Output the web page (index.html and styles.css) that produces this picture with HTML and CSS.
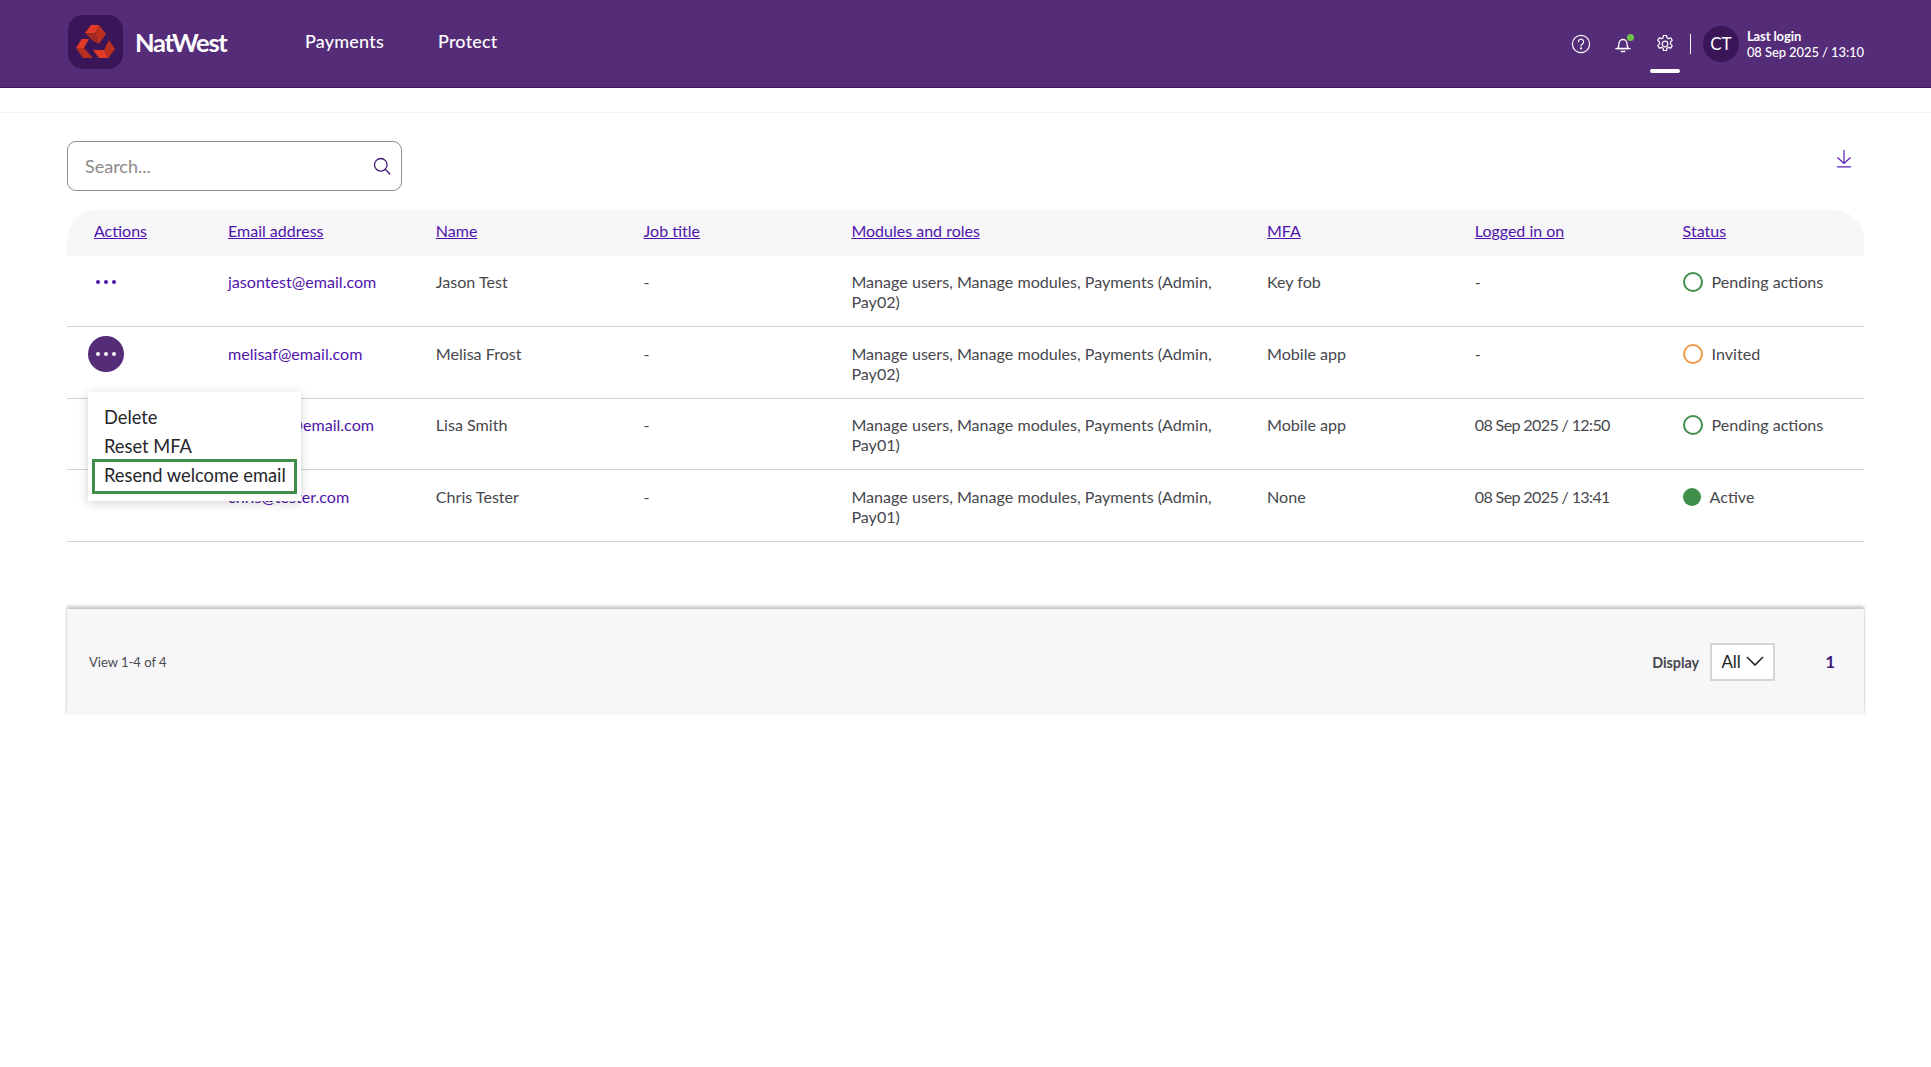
FILE: index.html
```html
<!DOCTYPE html>
<html lang="en">
<head>
<meta charset="utf-8">
<title>NatWest - Users</title>
<link rel="stylesheet" href="styles.css">
</head>
<body>
<header class="topbar">
  <div class="brand">
    <span class="logo">
      <svg viewBox="0 0 55 54" width="55" height="54" aria-hidden="true">
        <polygon points="17,18 23,10 31,10 27,18.500" fill="#e23a26"/>
        <polygon points="31,10 38,19 31,29 27,18.500" fill="#bb2f20"/>
        <polygon points="17,18 27,18.500 31,29 25,26" fill="#a32a1e"/>
        <polygon points="8,33 13.700,24 21,24 16,33" fill="#e23a26"/>
        <polygon points="8,33 16,33 25,43 15,43" fill="#b52f20"/>
        <polygon points="25,35 36,35 40.300,43 31,43" fill="#e23a26"/>
        <polygon points="41,25 47,34 40.300,43 36,35" fill="#bb2f20"/>
      </svg>
    </span>
    <span class="brand-name">NatWest</span>
  </div>
  <nav class="main-nav">
    <a href="#">Payments</a>
    <a href="#">Protect</a>
  </nav>
  <div class="utility">
    <span class="util-icon">
      <svg viewBox="0 0 20 20" width="20" height="20" fill="none" stroke="#fff" stroke-width="1.2" stroke-linecap="round">
        <circle cx="10" cy="10" r="8.6"/>
        <path d="M7.4 7.8a2.6 2.6 0 1 1 4 2.2c-.9.6-1.4 1-1.4 2"/>
        <circle cx="10" cy="14.4" r=".5" fill="#fff"/>
      </svg>
    </span>
    <span class="util-icon bell">
      <svg viewBox="0 0 20 20" width="20" height="20" fill="none" stroke="#fff" stroke-width="1.3" stroke-linecap="round" stroke-linejoin="round">
        <path d="M4.5 14.5c1.2-1.2 1.5-2.5 1.5-5a4 4 0 0 1 8 0c0 2.500.3 3.800 1.500 5z"/>
        <path d="M2.800 14.600h14.400"/>
        <path d="M8.300 17.500h3.400"/>
      </svg>
      <i class="notify-dot"></i>
    </span>
    <span class="util-icon gear active">
      <svg viewBox="0 0 20 20" width="20" height="20" fill="none" stroke="#fff" stroke-width="1.200" stroke-linejoin="round">
        <circle cx="10" cy="10" r="2.800"/>
        <path d="M8.500 1.500h3l.5 2.300 1.500.8 2.200-.8 1.500 2.600-1.700 1.600v1.900l1.700 1.700-1.500 2.500-2.200-.7-1.500.8-.5 2.300h-3l-.5-2.300-1.500-.8-2.200.7-1.500-2.500 1.700-1.700V8.000L2.800 6.400l1.500-2.600 2.200.8 1.500-.8z"/>
      </svg>
    </span>
    <span class="divider"></span>
    <span class="avatar">CT</span>
    <div class="last-login">
      <strong>Last login</strong>
      <span>08 Sep 2025 / 13:10</span>
    </div>
  </div>
</header>
<div class="subbar"></div>

<main class="content">
  <div class="toolbar">
    <label class="search">
      <span class="search-text">Search...</span>
      <svg viewBox="0 0 18 18" width="18" height="18" fill="none" stroke="#3f1a78" stroke-width="1.300" stroke-linecap="round">
        <circle cx="7.800" cy="7.800" r="6.300"/>
        <path d="M12.300 12.300l4.500 4.700"/>
      </svg>
    </label>
    <a class="download" href="#" aria-label="Download">
      <svg viewBox="0 0 16 18" width="16" height="18" fill="none" stroke="#5a1fb0" stroke-width="1.200">
        <path d="M8 0v13M1.500 7.500L8 13.500l6.500-6M1 16.800h14"/>
      </svg>
    </a>
  </div>

  <section class="users">
    <div class="row head">
      <a href="#" class="first">Actions</a>
      <a href="#">Email address</a>
      <a href="#">Name</a>
      <a href="#">Job title</a>
      <a href="#">Modules and roles</a>
      <a href="#">MFA</a>
      <a href="#">Logged in on</a>
      <a href="#">Status</a>
    </div>

    <div class="row">
      <span class="more"><i></i><i></i><i></i></span>
      <a class="email" href="#">jasontest@email.com</a>
      <span>Jason Test</span>
      <span>-</span>
      <span class="modules">Manage users, Manage modules, Payments (Admin, Pay02)</span>
      <span>Key fob</span>
      <span>-</span>
      <span class="status"><i class="ring green"></i>Pending actions</span>
    </div>

    <div class="row">
      <span class="more open"><i></i><i></i><i></i></span>
      <a class="email" href="#">melisaf@email.com</a>
      <span>Melisa Frost</span>
      <span>-</span>
      <span class="modules">Manage users, Manage modules, Payments (Admin, Pay02)</span>
      <span>Mobile app</span>
      <span>-</span>
      <span class="status"><i class="ring orange"></i>Invited</span>
    </div>

    <div class="row">
      <span class="more"></span>
      <a class="email" href="#">lisasmith@email.com</a>
      <span>Lisa Smith</span>
      <span>-</span>
      <span class="modules">Manage users, Manage modules, Payments (Admin, Pay01)</span>
      <span>Mobile app</span>
      <span class="date">08 Sep 2025 / 12:50</span>
      <span class="status"><i class="ring green"></i>Pending actions</span>
    </div>

    <div class="row">
      <span class="more"></span>
      <a class="email" href="#">chris@tester.com</a>
      <span>Chris Tester</span>
      <span>-</span>
      <span class="modules">Manage users, Manage modules, Payments (Admin, Pay01)</span>
      <span>None</span>
      <span class="date">08 Sep 2025 / 13:41</span>
      <span class="status"><i class="dot"></i>Active</span>
    </div>

    <ul class="menu">
      <li>Delete</li>
      <li>Reset MFA</li>
      <li class="focused">Resend welcome email</li>
    </ul>
  </section>

  <footer class="pager">
    <span class="count">View 1-4 of 4</span>
    <div class="pager-right">
      <span class="display-label">Display</span>
      <span class="select">All
        <svg viewBox="0 0 18 10" width="18" height="10" fill="none" stroke="#222" stroke-width="1.600"><path d="M1 1l8 8 8-8"/></svg>
      </span>
      <a class="page-num" href="#">1</a>
    </div>
  </footer>
</main>
</body>
</html>
```

FILE: styles.css
```css
* { box-sizing: border-box; }
html, body { margin: 0; background: #fff; }
body { font-family: "Lato", "Open Sans", sans-serif; color: #47474d; font-size: 16.100px; }
a { color: #4f14ab; }

.topbar {
  height: 88px;
  background: #542c78;
  border-bottom: 1px solid #3f1a60;
  display: flex;
  align-items: center;
  padding: 0 67px 0 68px;
  color: #fff;
}
.brand { display: flex; align-items: center; gap: 12px; width: 237px; margin-top: -3px; }
.logo { width: 55px; height: 54px; background: #3a1558; border-radius: 15px; display: block; }
.logo svg { display: block; }
.brand-name { font-size: 25.500px; font-weight: 700; letter-spacing: -1.300px; }
.main-nav { display: flex; gap: 54px; margin-top: -6px; }
.main-nav a { color: #fff; text-decoration: none; font-size: 18px; font-weight: 500; letter-spacing: 0.200px; }
.utility { margin-left: auto; display: flex; align-items: center; height: 100%; }
.util-icon { width: 20px; height: 20px; margin-right: 22px; position: relative; display: block; }
.util-icon svg { display: block; }
.notify-dot { position: absolute; top: 0; right: -1px; width: 7px; height: 7px; background: #6cc24a; border-radius: 50%; }
.gear { margin-right: 15px; }
.gear.active::after {
  content: "";
  position: absolute;
  left: -5px;
  right: -5px;
  top: 35px;
  height: 4px;
  background: #fff;
  border-radius: 2px;
}
.divider { width: 1px; height: 20px; background: #fff; margin-right: 12px; }
.avatar {
  width: 36px; height: 36px; border-radius: 50%;
  background: #3a1558; color: #fff;
  display: flex; align-items: center; justify-content: center;
  font-size: 17px; font-weight: 400; margin-right: 8px;
}
.last-login { display: flex; flex-direction: column; font-size: 13px; line-height: 16px; letter-spacing: -0.100px; }
.last-login strong { font-weight: 700; }
.last-login span { font-weight: 500; }

.subbar { height: 25px; border-bottom: 1px solid #f3f3f6; }

.content { padding: 0 67px; }
.toolbar { display: flex; justify-content: space-between; align-items: flex-start; padding-top: 28px; height: 97px; }
.search {
  width: 335px; height: 50px;
  border: 1px solid #8d8d8d; border-radius: 9px;
  display: flex; align-items: center; justify-content: space-between;
  padding: 0 10px 0 17px;
}
.search-text { font-size: 18px; color: #8a8a8a; }
.download { display: block; width: 16px; height: 18px; margin: 9px 12px 0 0; }
.download svg { display: block; }

.users { position: relative; }
.row {
  display: grid;
  grid-template-columns: 161px 207.800px 207.800px 207.800px 415.600px 207.800px 207.800px 1fr;
  height: 71.500px;
  border-bottom: 1.500px solid #d2d2d6;
  padding-top: 16.500px;
  line-height: 20px;
}
.row.head {
  height: 45.500px;
  background: #f7f7fa;
  border: 0;
  border-radius: 30px 30px 0 0;
  padding-top: 11px;
  line-height: 20px;
  font-size: 16px;
}
.row.head .first { margin-left: 27px; justify-self: start; }
.row.head a { justify-self: start; }
.email { text-decoration: none; }
.modules { padding-right: 30px; }
.date { letter-spacing: -0.650px; }

.more { display: flex; align-items: center; justify-content: center; gap: 4px; width: 36px; height: 36px; margin: -8px 0 0 21px; border-radius: 50%; }
.more i { width: 4px; height: 4px; border-radius: 50%; background: #4f14ab; display: block; }
.more.open { background: #542c78; }
.more.open i { background: #fff; }

.status { display: flex; align-items: flex-start; }
.ring { width: 20px; height: 20px; border-radius: 50%; border: 2.500px solid; margin-right: 9px; display: block; }
.ring.green { border-color: #3f8f4a; }
.ring.orange { border-color: #f0994a; }
.dot { width: 18px; height: 18px; margin: 1px 9px 0 0; border-radius: 50%; background: #3f8f4a; display: block; }

.menu {
  position: absolute;
  left: 21px;
  top: 182px;
  width: 213px;
  height: 109px;
  margin: 0;
  padding: 11px 4px 6px 4px;
  list-style: none;
  background: #fff;
  box-shadow: 0 2px 10px rgba(0, 0, 0, .18);
  font-size: 18.300px;
  color: #26262a;
  line-height: 29px;
}
.menu li { padding-left: 12px; }
.menu .focused { border: 3px solid #3f8f4a; padding-left: 9px; line-height: 26px; height: 35px; margin-top: -2px; white-space: nowrap; }

.pager {
  margin-top: 67.500px;
  height: 106px;
  background: #f7f7fa;
  box-shadow: 0 -3px 3px rgba(0, 0, 0, .2), 0 0 2px rgba(0, 0, 0, .12);
  display: flex;
  align-items: center;
  justify-content: space-between;
  padding: 0 29px 0 22px;
  font-size: 13px;
}
.pager-right { display: flex; align-items: center; }
.display-label { font-weight: 700; margin-right: 11px; font-size: 14.300px; }
.select {
  width: 65px; height: 38px;
  background: #fff;
  border: 2px solid #d5d5d8;
  display: flex; align-items: center; justify-content: center; gap: 5px;
  font-size: 17px; color: #222;
  padding-bottom: 2px;
  margin-right: 50px;
}
.page-num { font-size: 17px; font-weight: 700; color: #3f1a78; text-decoration: none; margin-top: -2px; }
```
